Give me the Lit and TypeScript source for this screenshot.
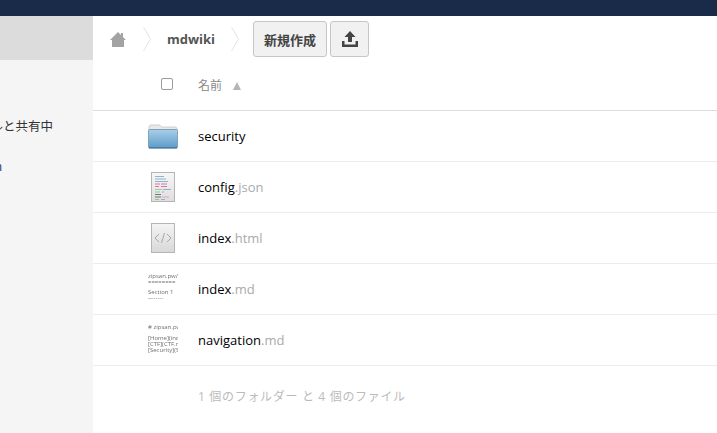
import { LitElement, html, css, svg } from "lit";
import { customElement } from "lit/decorators.js";

const folder = svg`<svg width="30" height="25" viewBox="0 0 30 25">
<defs><linearGradient id="fg" x1="0" y1="0" x2="0" y2="1"><stop offset="0" stop-color="#a9cfe8"/><stop offset="1" stop-color="#5b9bc9"/></linearGradient></defs>
<path d="M1 6 V3 Q1 1 3 1 H11 Q12.500 1 13 2.500 L13.500 3 H27 Q29 3 29 5 V6Z" fill="#e8e8e8" stroke="#c4c4c4" stroke-width=".8"/>
<rect x=".5" y="5.500" width="29" height="18.500" rx="1" fill="url(#fg)" stroke="#6f94ad" stroke-width=".8"/>
<rect x="1" y="23" width="28" height="1.500" fill="#4a7c9f"/></svg>`;

const cfgLines: [number, number, number, string][] = [
  [4, 4, 9, "#8fb4c9"], [4, 6.500, 11, "#8fb4c9"], [4, 9, 13, "#8fb4c9"], [4, 11.500, 5, "#e56fb5"], [10, 11.500, 6, "#e56fb5"],
  [4, 14, 4, "#e56fb5"], [10, 14, 6, "#e56fb5"], [4, 17, 7, "#9ccf9c"], [12, 17, 8, "#8fb4c9"], [4, 19.500, 5, "#8fc98f"], [11, 19.500, 2, "#8fb4c9"],
  [4, 22, 6, "#777"], [4, 24.500, 6, "#777"], [11, 24.500, 7, "#e6a0c8"], [4, 27, 4, "#8fc98f"], [10, 27, 4, "#8fb4c9"],
];
const cfg = svg`<svg width="24" height="30" viewBox="0 0 24 30">
<defs><linearGradient id="pg" x1="0" y1="0" x2="0" y2="1"><stop offset="0" stop-color="#f7f7f7"/><stop offset="1" stop-color="#dedede"/></linearGradient></defs>
<rect x=".5" y=".5" width="23" height="29" fill="url(#pg)" stroke="#b5b5b5"/>
${cfgLines.map(([x, y, w, c]) => svg`<rect x=${x} y=${y} width=${w} height="1" fill=${c}/>`)}</svg>`;

const htmlIcon = svg`<svg width="24" height="30" viewBox="0 0 24 30">
<defs><linearGradient id="hg" x1="0" y1="0" x2="0" y2="1"><stop offset="0" stop-color="#f4f4f4"/><stop offset="1" stop-color="#d8d8d8"/></linearGradient></defs>
<rect x=".5" y=".5" width="23" height="29" fill="url(#hg)" stroke="#b5b5b5"/>
<path d="M8 11 L4 15 L8 19 M16 11 L20 15 L16 19 M13.500 10 L10.500 20" fill="none" stroke="#a8a8a8"/></svg>`;

const home = svg`<svg width="16" height="15" viewBox="0 0 16 15"><path d="M8 0 L11 3 V1 H13 V5 L16 8 H14 V15 H2 V8 H0Z" fill="#a3a3a3"/></svg>`;
const chevron = svg`<svg class="chev" width="8" height="24" viewBox="0 0 8 24"><path d="M.5 0 L7.500 12 L.5 24" fill="none" stroke="#e4e4e4"/></svg>`;
const upload = svg`<svg width="16" height="16" viewBox="0 0 16 16"><path d="M8 0 L13.500 6 H10 V11 H6 V6 H2.500Z M0 10 H2.500 V13.500 H13.500 V10 H16 V16 H0Z" fill="#444"/></svg>`;

@customElement("app-root")
export class AppRoot extends LitElement {
  static styles = css`
    :host { display: block; width: 717px; height: 433px; overflow: hidden; background: #fff;
      font-family: "Open Sans", "Noto Sans CJK JP", sans-serif; color: #222; }
    .top { height: 16px; background: #1a2b4a; }
    .body { display: flex; height: 417px; }
    .side { width: 93px; flex: none; background: #f5f5f5; overflow: hidden; }
    .active { height: 44px; background: #dcdcdc; }
    .share { display: flex; justify-content: flex-end; white-space: nowrap; padding: 57px 40px 0 0; height: 20px;
      font-size: 12.500px; line-height: 20px; color: #333; }
    .clip { display: flex; justify-content: flex-end; white-space: nowrap; margin: 21px 0 0 -40px; width: 42px; overflow: hidden;
      font-size: 12px; line-height: 18px; color: #0a2a5c; }
    .main { flex: 1; min-width: 0; }
    .crumbs { display: flex; align-items: center; height: 36px; padding: 5px 0 3px 17px; }
    .home { display: flex; width: 33px; }
    .chev { flex: none; }
    .dir { font-size: 13px; font-weight: 700; color: #555; width: 80px; text-align: center; flex: none; }
    .btn { box-sizing: border-box; height: 36px; border: 1px solid #c6c6c6; border-radius: 3px; background: #f1f1f1;
      display: flex; align-items: center; justify-content: center; font-size: 13px; font-weight: 700; color: #444; flex: none; }
    .new { width: 74px; margin-left: 14px; }
    .up { width: 39px; margin-left: 3px; }
    .head { box-sizing: border-box; height: 51px; display: flex; align-items: center;
      border-bottom: 1px solid #dcdcdc; font-size: 12px; color: #888; }
    .check { box-sizing: border-box; width: 12px; height: 12px; border: 1px solid #9a9a9a; border-radius: 2px; background: #fff; margin: -2px 0 0 68px; }
    .name { margin: 0 0 0 25px; }
    .tri { margin: 2px 0 0 11px; width: 0; height: 0; border-left: 4px solid transparent; border-right: 4px solid transparent; border-bottom: 8px solid #b5b5b5; }
    .row { box-sizing: border-box; height: 51px; display: flex; align-items: center; border-bottom: 1px solid #ededed; font-size: 13px; color: #000; }
    .icon { width: 30px; margin-left: 55px; margin-right: 20px; display: flex; justify-content: center; flex: none; }
    .ext { color: #aaa; }
    .thumb { width: 30px; height: 36px; overflow: hidden; white-space: nowrap; font-size: 6px; line-height: 6px; color: #666; opacity: .95; will-change: opacity; }
    .thumb div { height: 6px; }
    .t1 { padding-top: 2px; height: 34px; }
    .t2 { padding-top: 2px; height: 34px; }
    .thumb .sp { height: 5px; }
    .t1 .sp { height: 4px; }
    .foot { padding: 22px 0 0 105px; font-size: 12px; letter-spacing: .68px; color: #bbb; line-height: 18px; }
  `;

  private row(icon: unknown, base: string, ext = "") {
    return html`<div class="row"><div class="icon">${icon}</div><span>${base}<span class="ext">${ext}</span></span></div>`;
  }

  render() {
    const t1 = html`<div class="thumb t1"><div>zipsan.pw/v</div><div>========</div><div class="sp"></div><div>Section 1</div><div>--------</div></div>`;
    const t2 = html`<div class="thumb t2"><div># zipsan.pw</div><div class="sp"></div><div>[Home](ind</div><div>[CTF](CTF.m</div><div>[Security](S</div></div>`;
    return html`
      <div class="top"></div>
      <div class="body">
        <aside class="side">
          <div class="active"></div>
          <div class="share">ファイルと共有中</div>
          <div class="clip">Admin</div>
        </aside>
        <main class="main">
          <div class="crumbs">
            <span class="home">${home}</span>${chevron}
            <span class="dir">mdwiki</span>${chevron}
            <div class="btn new">新規作成</div>
            <div class="btn up">${upload}</div>
          </div>
          <div class="head"><span class="check"></span><span class="name">名前</span><span class="tri"></span></div>
          ${this.row(folder, "security")}
          ${this.row(cfg, "config", ".json")}
          ${this.row(htmlIcon, "index", ".html")}
          ${this.row(t1, "index", ".md")}
          ${this.row(t2, "navigation", ".md")}
          <div class="foot">1 個のフォルダー と 4 個のファイル</div>
        </main>
      </div>`;
  }
}
